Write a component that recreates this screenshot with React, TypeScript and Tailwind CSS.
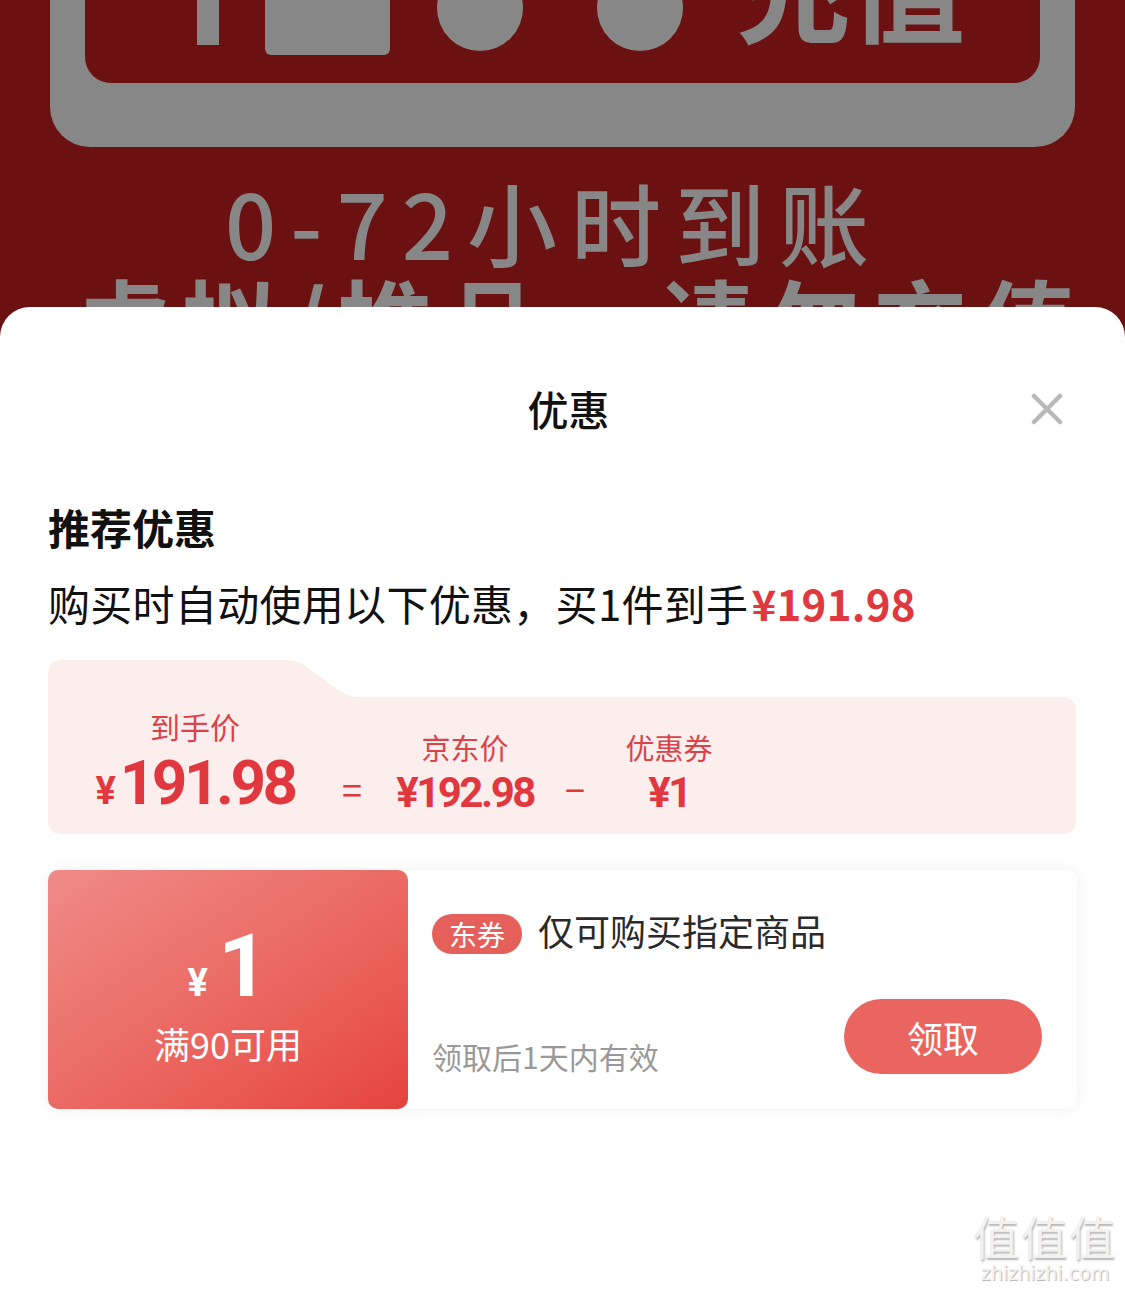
import React from "react";

function BackgroundArt() {
  return (
    <div className="absolute left-0 top-0 w-[1125px] h-[340px] overflow-hidden bg-[#6b1111] text-[#878787]">
      <svg width="1125" height="340" className="absolute left-0 top-0">
        <rect x="50" y="-80" width="1025" height="227" rx="40" fill="#878787" />
        <rect x="85" y="-80" width="955" height="163" rx="26" fill="#6b1111" />
        <rect x="197" y="0" width="22" height="45" fill="#878787" />
        <rect x="265" y="-10" width="125" height="65" rx="6" fill="#878787" />
        <circle cx="480" cy="8" r="43" fill="#878787" />
        <circle cx="640" cy="8" r="43" fill="#878787" />
      </svg>
      <div className="absolute left-[735px] top-[-73px] text-[115px] leading-none font-bold">充值</div>
      <div className="absolute left-[225px] top-[176px] text-[90px] leading-[90px] font-medium tracking-[14px] whitespace-nowrap">
        0-72小时到账
      </div>
      <div className="absolute left-[75px] top-[272px] text-[95px] leading-none font-bold tracking-[12px] whitespace-nowrap">
        虚拟/推品，请勿充值
      </div>
    </div>
  );
}

function CloseIcon() {
  return (
    <svg width="32" height="32" viewBox="0 0 32 32">
      <path d="M3 3 L29 29 M29 3 L3 29" stroke="#b8b8b8" strokeWidth="4.5" strokeLinecap="round" />
    </svg>
  );
}

function PriceBox() {
  return (
    <div className="relative mt-[36px] h-[174px]">
      <svg width="1028" height="174" className="absolute left-0 top-0">
        <path
          d="M0 14 Q0 0 14 0 L238 0 Q248 0 256 5 L293 32 Q301 37 311 37 L1014 37 Q1028 37 1028 51 L1028 160 Q1028 174 1014 174 L14 174 Q0 174 0 160 Z"
          fill="#fdeeee"
        />
      </svg>
      <div className="relative flex items-start text-[#e0383e]">
        <div className="w-[294px] flex flex-col items-center mt-[51px]">
          <div className="text-[30px] leading-none text-[#d9434a]">到手价</div>
          <div className="mt-[11px] flex items-baseline font-bold leading-none font-['Roboto',sans-serif]">
            <span className="text-[38px] mr-[4px]">¥</span>
            <span className="text-[62px] tracking-[-3.5px]">191.98</span>
          </div>
        </div>
        <div className="w-[20px] mt-[110px] text-[36px] leading-[36px] text-center">=</div>
        <div className="ml-[8px] w-[190px] flex flex-col items-center mt-[73px]">
          <div className="text-[29px] leading-none text-[#d9434a]">京东价</div>
          <div className="mt-[10px] text-[42px] leading-none font-bold tracking-[-2.5px] font-['Roboto',sans-serif]">
            ¥192.98
          </div>
        </div>
        <div className="ml-[1px] w-[28px] mt-[110px] text-[36px] leading-[36px] text-center">−</div>
        <div className="ml-[20px] w-[120px] flex flex-col items-center mt-[73px]">
          <div className="text-[29px] leading-none text-[#d9434a]">优惠券</div>
          <div className="mt-[10px] text-[42px] leading-none font-bold tracking-[-2.5px] font-['Roboto',sans-serif]">
            ¥1
          </div>
        </div>
      </div>
    </div>
  );
}

function CouponCard() {
  return (
    <div className="mt-[36px] flex h-[239px] rounded-[10px] shadow-[0_0_14px_rgba(0,0,0,0.06)]">
      <div className="w-[360px] rounded-[10px] bg-linear-to-br from-[#ef8b88] to-[#e5433d] flex flex-col items-center text-white pt-[52px]">
        <div className="flex items-baseline leading-none font-bold font-['Roboto',sans-serif]">
          <span className="text-[38px] mr-[10px]">¥</span>
          <span className="text-[88px]">1</span>
        </div>
        <div className="mt-[15px] text-[36px] leading-none">满90可用</div>
      </div>
      <div className="flex-1 bg-white rounded-r-[10px] pl-[24px] pr-[35px] pt-[42px] pb-[35px] flex flex-col justify-between">
        <div className="flex items-center">
          <div className="h-[40px] w-[90px] rounded-full bg-[#e6605b] text-white text-[28px] leading-none flex items-center justify-center">
            东券
          </div>
          <div className="ml-[16px] mb-[8px] text-[36px] leading-none text-[#2a2a2a]">仅可购买指定商品</div>
        </div>
        <div className="flex items-end justify-between">
          <div className="mb-[3px] text-[30px] leading-none text-[#999999]">领取后1天内有效</div>
          <div className="h-[75px] w-[198px] rounded-full bg-[#ea6560] text-white text-[36px] leading-none flex items-center justify-center">
            领取
          </div>
        </div>
      </div>
    </div>
  );
}

export default function App() {
  return (
    <div className="relative w-[1125px] h-[1293px] overflow-hidden bg-[#6b1111] font-['Noto_Sans_CJK_SC','Noto_Sans',sans-serif]">
      <BackgroundArt />
      <div className="relative mt-[307px] h-[986px] bg-white rounded-t-[30px] px-[48px]">
        <div className="pt-[81px] flex justify-center">
          <div className="ml-[12px] text-[41px] leading-none font-medium text-[#111]">优惠</div>
        </div>
        <div className="absolute right-[62px] top-[86px]">
          <CloseIcon />
        </div>
        <div className="mt-[77px] text-[42px] leading-none font-bold text-[#111]">推荐优惠</div>
        <div className="mt-[34px] text-[42px] leading-none text-[#111] whitespace-nowrap tracking-[0.3px]">
          购买时自动使用以下优惠，买1件到手
          <span className="ml-[3px] text-[#e0383e] font-bold">¥191.98</span>
        </div>
        <PriceBox />
        <CouponCard />
        <div className="absolute right-[8px] bottom-[10px] flex flex-col items-center select-none text-[#f2f2f2]">
          <div className="text-[46px] leading-none tracking-[2px] [text-shadow:1px_2px_2px_#b5b5b5]">值值值</div>
          <div className="mt-[6px] text-[19px] leading-none font-['DejaVu_Sans',sans-serif] [text-shadow:1px_1px_1px_#b5b5b5]">
            zhizhizhi.com
          </div>
        </div>
      </div>
    </div>
  );
}
